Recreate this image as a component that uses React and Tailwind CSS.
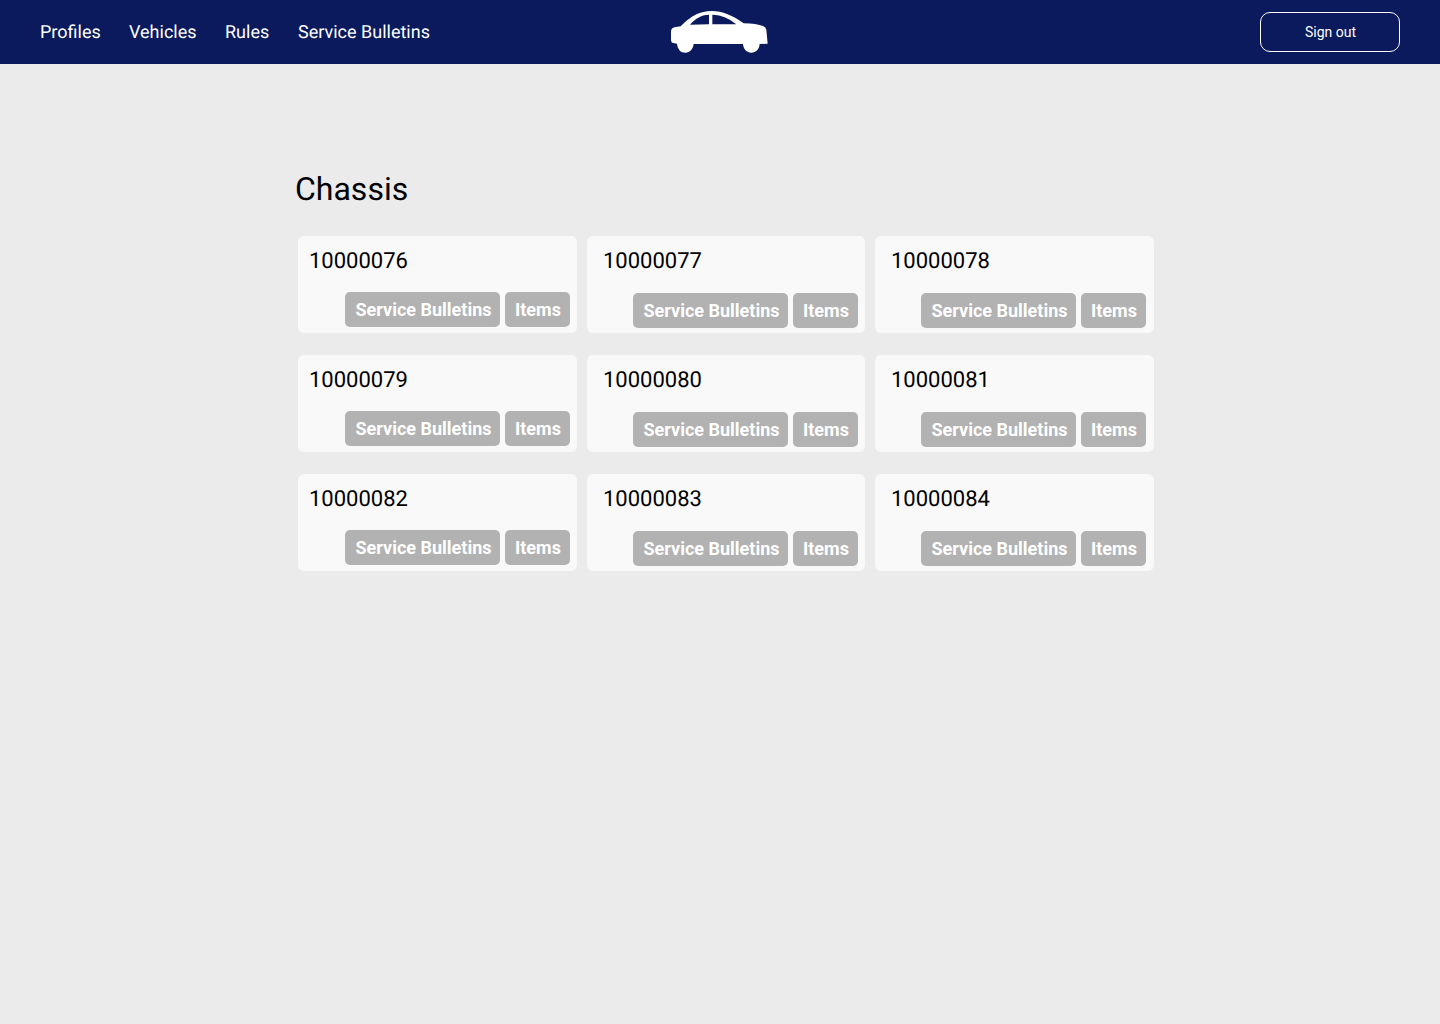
const navLinks = [
  { label: 'Profiles', width: 'w-[89px]' },
  { label: 'Vehicles', width: 'w-[96px]' },
  { label: 'Rules', width: 'w-[73px]' },
  { label: 'Service Bulletins', width: 'w-[140px]' },
];

const chassis = [
  10000076, 10000077, 10000078,
  10000079, 10000080, 10000081,
  10000082, 10000083, 10000084,
];

const buttonInset = ['pr-[7px]', 'pr-[7px]', 'pr-2'];

function CarLogo() {
  return (
    <svg width="120" height="64" viewBox="0 0 360 192" fill="#fff" aria-hidden="true">
      <path
        fillRule="evenodd"
        d="M33 92Q34 85 43 82L62 79Q76 63 98 49C118 37 136 33 156 33C186 33 219 46 251 70Q290 71 309 78Q318 81 319 89L323 131L299 132C298 147 288 158 274 158C260 158 250 147 249 132L101 132C99 148 90 158 76 158C62 158 53 148 51 131L40 129Q33 128 33 119ZM90 74L147 73L147 44C122 45 106 56 90 74ZM157 44L157 73L229 73C209 56 185 45 157 44Z"
      />
    </svg>
  );
}

function CardButton({ children, className }) {
  return (
    <button className={`h-[35px] whitespace-nowrap rounded-[5px] bg-[#b2b2b2] text-left text-lg leading-[35px] font-bold text-white ${className}`}>
      {children}
    </button>
  );
}

function ChassisCard({ number, column }) {
  const first = column === 0;
  return (
    <article className={`flex h-[97px] flex-col justify-between rounded-md bg-[#f9f9f9] ${first ? 'pb-[6px]' : 'pb-[5px]'}`}>
      <h2 className={`pt-[13px] text-[22px] leading-[26px] ${first ? 'pl-[11px]' : 'pl-4'}`}>{number}</h2>
      <div className={`flex justify-end gap-[5px] ${buttonInset[column]}`}>
        <CardButton className="w-[155px] pl-[10.5px]">Service Bulletins</CardButton>
        <CardButton className="w-[65px] pl-[10px]">Items</CardButton>
      </div>
    </article>
  );
}

export default function App() {
  return (
    <div className="min-h-screen bg-[#ebebeb] font-['Roboto',sans-serif] text-black [text-rendering:geometricPrecision]">
      <header className="grid h-16 grid-cols-[1fr_120px_1fr] items-center bg-[#0a1a5c] text-white">
        <nav className="flex pt-[2px] pl-10 text-lg">
          {navLinks.map(({ label, width }) => (
            <a key={label} className={`whitespace-nowrap ${width}`}>{label}</a>
          ))}
        </nav>
        <CarLogo />
        <button className="mr-10 h-10 w-[140px] justify-self-end rounded-[10px] border border-white pl-px text-sm">
          Sign out
        </button>
      </header>
      <main className="pt-[106px] pl-[295px]">
        <h1 className="text-[32px] leading-[38px]">Chassis</h1>
        <section className="mt-7 ml-[3px] grid grid-cols-[279px_278px_279px] gap-x-[10px] gap-y-[22px]">
          {chassis.map((number, index) => (
            <ChassisCard key={number} number={number} column={index % 3} />
          ))}
        </section>
      </main>
    </div>
  );
}
